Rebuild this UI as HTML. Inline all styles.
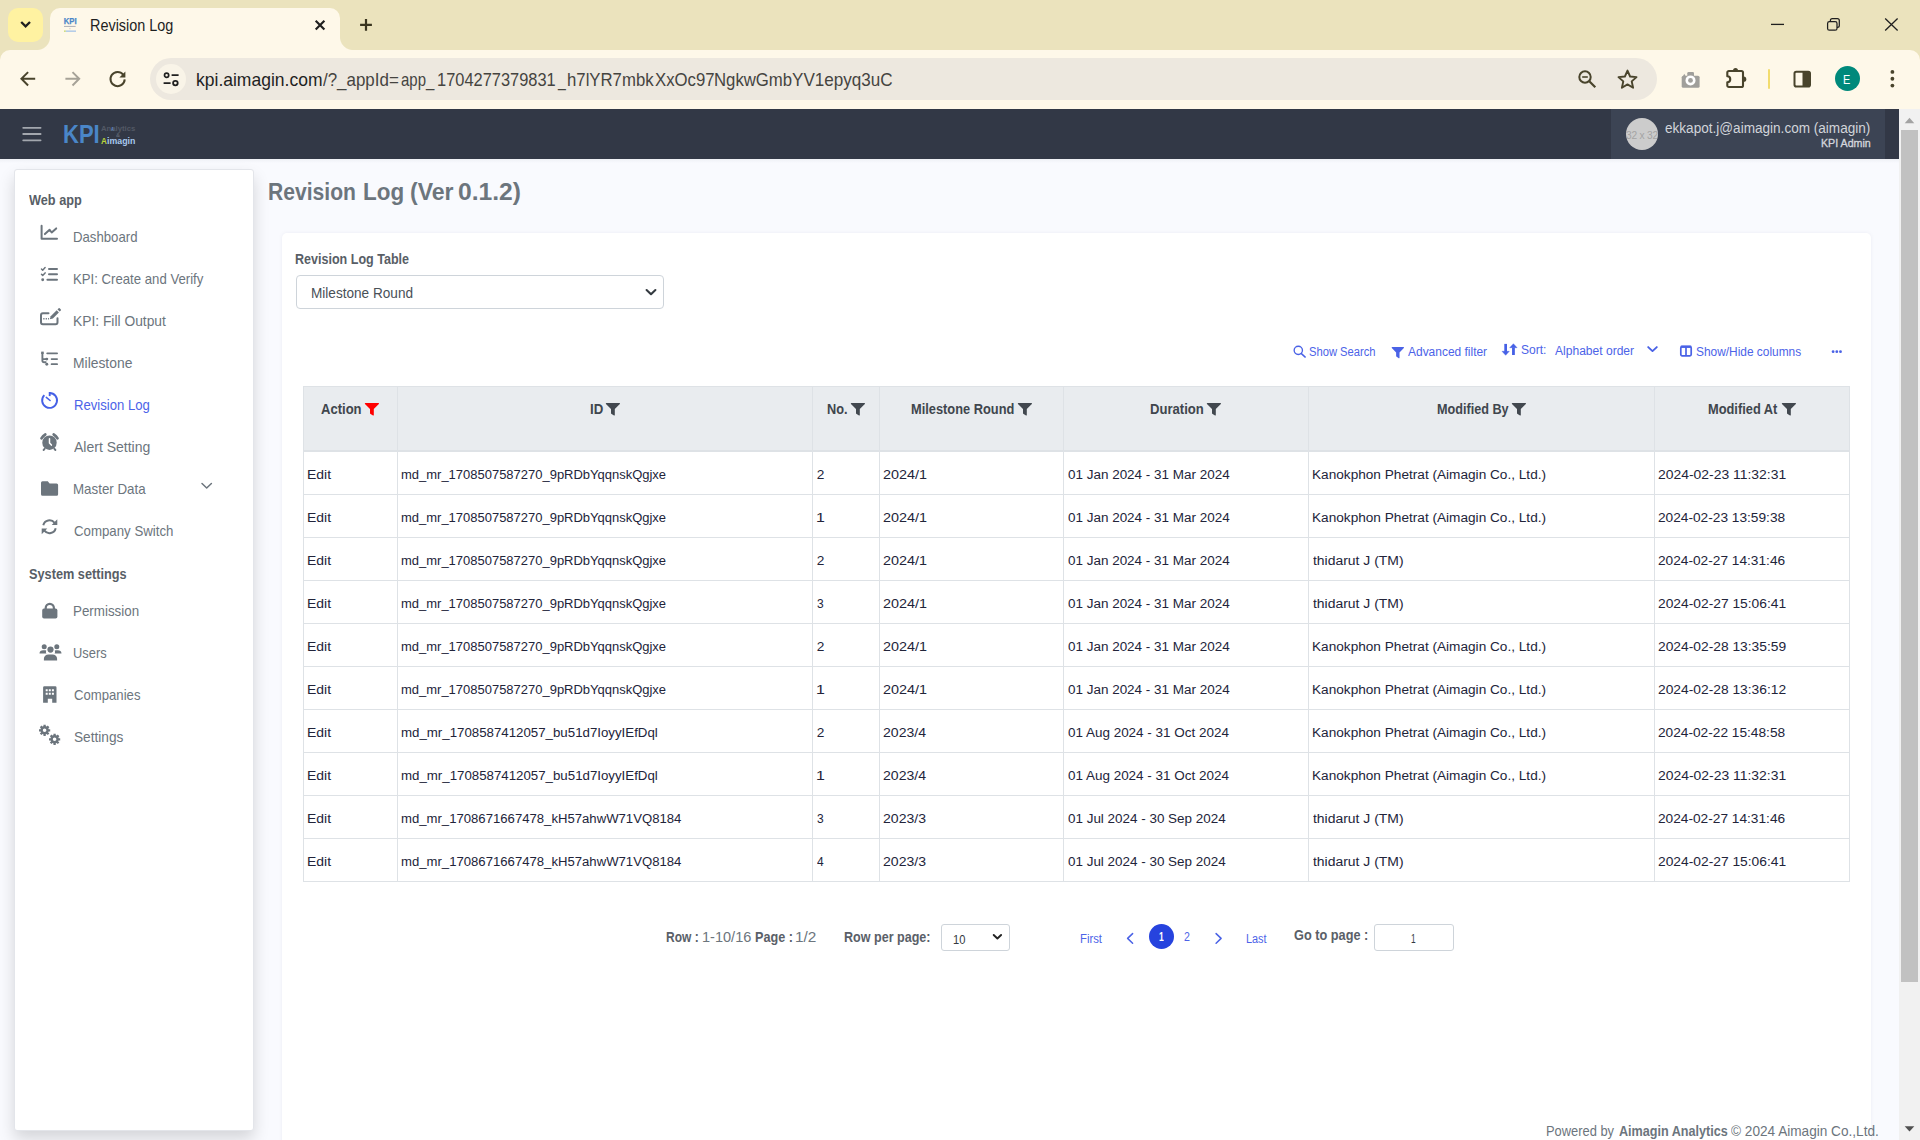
<!DOCTYPE html>
<html lang="en"><head><meta charset="utf-8"><title>Revision Log</title>
<style>

*{box-sizing:border-box;margin:0;padding:0}
html,body{width:1920px;height:1140px;overflow:hidden}
body{position:relative;background:#f9fafe;font-family:"Liberation Sans",sans-serif;}
.a{position:absolute}
.t{position:absolute;white-space:pre;line-height:1;transform-origin:0 50%;display:block}
svg{position:absolute;overflow:visible}
/* browser chrome */
#tabstrip{left:0;top:0;width:1920px;height:64px;background:#ebe3bd}
#tabsearch{left:8px;top:8px;width:35px;height:34px;border-radius:10px;background:#fff2a1}
#tab{left:50px;top:8px;width:290px;height:42px;background:#fef8e9;border-radius:10px 10px 0 0}
#tabl{left:37px;top:37px;width:13px;height:13px;background:radial-gradient(circle at 0 0,rgba(0,0,0,0) 12.5px,#fef8e9 13.5px)}
#tabr{left:340px;top:37px;width:13px;height:13px;background:radial-gradient(circle at 100% 0,rgba(0,0,0,0) 12.5px,#fef8e9 13.5px)}
#toolbar{left:0;top:50px;width:1920px;height:59px;background:#fef8e9;border-radius:10px 10px 0 0}
#omni{left:150px;top:58px;width:1507px;height:42px;border-radius:21px;background:#ede8df}
#siteinfo{left:156px;top:64px;width:30px;height:30px;border-radius:15px;background:#f9f4e8}
#avatar{left:1835px;top:66px;width:25px;height:25px;border-radius:12.5px;background:#00897b}
#ydiv{left:1768px;top:69px;width:2px;height:19.500px;background:#f2dc6e;border-radius:1px}
/* app */
#hdr{left:0;top:109px;width:1899px;height:49.5px;background:#323846}
#hdrsh{left:0;top:158px;width:1899px;height:5px;background:linear-gradient(#eceef3,#f9fafe)}
#user{left:1611px;top:109px;width:274px;height:49.5px;background:#3c4454}
#uav{left:1626px;top:118px;width:32px;height:32px;border-radius:16px;background:#cccccc;overflow:hidden}
#uav span{position:absolute;left:-4px;top:12px;width:40px;text-align:center;font-size:10.2px;line-height:12px;color:#a4a4a4;white-space:nowrap;letter-spacing:-0.2px}
#sbtrack{left:1899px;top:109px;width:21px;height:1031px;background:#f1f1f1}
#sbthumb{left:1901px;top:130px;width:17px;height:852px;background:#c1c1c1}
#side{left:14px;top:169px;width:240px;height:962px;background:#fff;border-radius:3px;border:1px solid #e3e5ea;box-shadow:0 8px 16px rgba(0,0,0,.15)}
#card{left:282px;top:233px;width:1589px;height:920px;background:#fff;border-radius:5px;box-shadow:0 0 4px rgba(30,40,80,.06)}
#sel{left:296px;top:275px;width:368px;height:34px;border:1px solid #ced4da;border-radius:4px;background:#fff}
#thead{left:303px;top:386px;width:1547px;height:65px;background:#e9ecef}
.hl{position:absolute;left:303px;width:1547px;height:1px;background:#dee2e6}
.vl{position:absolute;top:386px;width:1px;height:496px;background:#dee2e6}
#psel{left:941px;top:924px;width:69px;height:27px;border:1px solid #ced4da;border-radius:3px;background:#fff}
#pinp{left:1374px;top:924px;width:80px;height:27px;border:1px solid #ced4da;border-radius:3px;background:#fff}
#pcur{left:1149px;top:924px;width:25px;height:25px;border-radius:12.5px;background:#2643de}
</style></head>
<body>
<div class="a" id="tabstrip"></div>
<div class="a" id="tabsearch"></div>
<div class="a" id="toolbar"></div>
<div class="a" id="tab"></div><div class="a" id="tabl"></div><div class="a" id="tabr"></div>
<div class="a" id="omni"></div><div class="a" id="siteinfo"></div>
<div class="a" id="ydiv"></div><div class="a" id="avatar"></div>
<svg style="left:0px;top:0px" width="60" height="50" viewBox="0 0 60 50"><path d="M21.200 22l4.400 4.400 4.400-4.400" fill="none" stroke="#1f1f1f" stroke-width="2.300" stroke-linecap="butt" stroke-linejoin="miter"/></svg>
<svg style="left:60px;top:15px" width="20" height="20" viewBox="0 0 20 20"><text x="3.700" y="8.500" font-family="Liberation Sans" font-weight="700" font-size="8.800" fill="#4a86c8" stroke="#4a86c8" stroke-width=".25" textLength="12.900" lengthAdjust="spacingAndGlyphs">KPI</text><rect x="4" y="10.900" width="11.600" height="1.100" fill="#b4b6bc" /><rect x="9.200" y="13.300" width="1.300" height=".9" fill="#c5c7cc"/><rect x="4" y="15.500" width="1.800" height="1.300" fill="#c3d86a"/><rect x="5.800" y="15.500" width="10.200" height="1.300" fill="#a4c2e8"/></svg>
<svg style="left:300px;top:10px" width="90" height="30" viewBox="0 0 90 30"><path d="M15.700 10.700l8.700 8.700M24.400 10.700l-8.700 8.700" stroke="#1f1f1f" stroke-width="2.150" fill="none"/><path d="M60.100 14.900h11.800M66 9v11.800" stroke="#3a351f" stroke-width="2.200" fill="none"/></svg>
<svg style="left:1760px;top:10px" width="150" height="30" viewBox="0 0 150 30"><path d="M11 14.400h13" stroke="#1f1f1f" stroke-width="1.300" fill="none"/><rect x="67.600" y="11.700" width="9.400" height="8.500" rx="1.800" stroke="#1f1f1f" stroke-width="1.250" fill="none"/><path d="M70.400 11.700v-1.200a1.900 1.900 0 0 1 1.900-1.900h5.100a1.900 1.900 0 0 1 1.900 1.900v5a1.900 1.900 0 0 1-1.900 1.900h-.4" stroke="#1f1f1f" stroke-width="1.250" fill="none"/><path d="M125.200 8.500l12.400 12M137.600 8.500l-12.400 12" stroke="#1f1f1f" stroke-width="1.300" fill="none"/></svg>
<svg style="left:10px;top:60px" width="140" height="40" viewBox="0 0 140 40"><path d="M25.200 18.800H11.800M18.100 12.100l-6.700 6.700 6.700 6.700" stroke="#49442c" stroke-width="1.950" fill="none" stroke-linejoin="miter"/><path d="M55.400 18.800h13.400M62.500 12.100l6.700 6.700-6.700 6.700" stroke="#a6a297" stroke-width="1.950" fill="none"/><path d="M113.200 14.700A7.100 7.100 0 1 0 114.700 19.400" stroke="#49442c" stroke-width="2" fill="none"/><path d="M115.400 11.600v6h-6z" fill="#49442c"/></svg>
<svg style="left:156px;top:64px" width="30" height="30" viewBox="0 0 30 30"><circle cx="10.600" cy="11.200" r="2.100" fill="none" stroke="#1f1f1f" stroke-width="1.700"/><path d="M15.600 11.200h7M7.600 19.100h7" stroke="#1f1f1f" stroke-width="1.800" fill="none"/><circle cx="19.400" cy="19.100" r="2.300" fill="none" stroke="#1f1f1f" stroke-width="1.800"/></svg>
<svg style="left:1570px;top:62px" width="80" height="36" viewBox="0 0 80 36"><circle cx="15" cy="15" r="5.7" fill="none" stroke="#49442c" stroke-width="2"/><path d="M19.3 19.3l6 6" stroke="#49442c" stroke-width="2.2"/><path d="M12.2 15h5.6" stroke="#49442c" stroke-width="1.6"/><path d="M57.5 8.6l2.6 5.9 6.4.6-4.8 4.3 1.4 6.3-5.6-3.3-5.6 3.3 1.4-6.3-4.8-4.3 6.4-.6z" fill="none" stroke="#49442c" stroke-width="1.9" stroke-linejoin="round"/></svg>
<svg style="left:1670px;top:62px" width="240" height="36" viewBox="0 0 240 36"><rect x="11.700" y="13.700" width="17.900" height="12.100" rx="1.600" fill="#a09f9b"/><path d="M17.300 14v-2.700a1.300 1.300 0 0 1 1.300-1.300h4.100a1.300 1.300 0 0 1 1.300 1.300V14z" fill="#a09f9b"/><path d="M13.100 13.900l1.200-2.100 1.200 2.100z" fill="#a09f9b"/><circle cx="20.500" cy="18.400" r="5" fill="#ffffff"/><circle cx="20.500" cy="18.400" r="2.400" fill="#a09f9b"/><path d="M58.900 9H71.400a1.600 1.600 0 0 1 1.600 1.600V23.400a1.600 1.600 0 0 1-1.600 1.600H58.900a1.600 1.600 0 0 1-1.600-1.600V20.200a2.950 2.950 0 0 0 0-5.900V10.600a1.600 1.600 0 0 1 1.600-1.600z" fill="none" stroke="#49442c" stroke-width="2.100" stroke-linejoin="round"/><path d="M63 8.400a2.500 2.500 0 0 1 5 0z" fill="#49442c"/><path d="M73.700 14.600a2.600 2.600 0 0 1 0 5.200z" fill="#49442c"/><rect x="124.500" y="9.700" width="15.500" height="14.800" rx="1.800" fill="none" stroke="#49442c" stroke-width="2"/><path d="M132.500 9.700h7.500v14.800h-7.500z" fill="#49442c"/><circle cx="222.400" cy="9.900" r="1.900" fill="#49442c"/><circle cx="222.400" cy="16.750" r="1.900" fill="#49442c"/><circle cx="222.400" cy="23.600" r="1.900" fill="#49442c"/></svg>
<div class="a" id="hdrsh"></div><div class="a" id="hdr"></div><div class="a" id="user"></div><div class="a" id="uav"><span>32 x 32</span></div>
<svg style="left:20px;top:120px" width="30" height="30" viewBox="0 0 30 30"><path d="M3.200 7.800h17.400M3.200 14h17.400M3.200 20.300h17.400" stroke="#a3a7ae" stroke-width="1.800" stroke-linecap="round" fill="none"/></svg>
<div class="a" id="sbtrack"></div><div class="a" id="sbthumb"></div>
<svg style="left:1899px;top:109px" width="21" height="1031" viewBox="0 0 21 1031"><path d="M5.700 14.200l4.800-5.400 4.800 5.400z" fill="#a3a3a3"/><path d="M5.700 1017.200l4.800 5.400 4.800-5.400z" fill="#505050"/></svg>
<div class="a" id="side"></div><div class="a" id="card"></div><div class="a" id="sel"></div>
<svg style="left:640px;top:280px" width="24" height="24" viewBox="0 0 24 24"><path d="M6.600 10l4.400 4.200 4.400-4.200" fill="none" stroke="#343a40" stroke-width="2.100" stroke-linecap="round" stroke-linejoin="round"/></svg>
<svg style="left:38px;top:222px" width="24" height="20" viewBox="0 0 24 20"><path d="M3.600 3.800v12.900h15.400" fill="none" stroke="#6c757d" stroke-width="2" stroke-linecap="round" stroke-linejoin="round"/><path d="M6.900 12.100l4.700-4.300 2.100 2.700 4.500-4.100" fill="none" stroke="#6c757d" stroke-width="2" stroke-linecap="round" stroke-linejoin="round"/></svg>
<svg style="left:38px;top:264px" width="24" height="20" viewBox="0 0 24 20"><path d="M11 5h8M11 10.300h8M9.400 15.700h9.600" fill="none" stroke="#6c757d" stroke-width="2" stroke-linecap="round" stroke-linejoin="round"/><path d="M3.500 5l1.200 1.200 2.400-2.600M3.500 10.300l1.200 1.200 2.400-2.600" fill="none" stroke="#6c757d" stroke-width="1.500" stroke-linecap="round" stroke-linejoin="round"/><circle cx="4.700" cy="15.700" r="1.450" fill="#6c757d"/></svg>
<svg style="left:38px;top:306px" width="26" height="22" viewBox="0 0 26 22"><path d="M10.500 7.300H4.900a1.900 1.900 0 0 0-1.900 1.900v7.100a1.900 1.900 0 0 0 1.900 1.900h12.700a1.900 1.900 0 0 0 1.900-1.900V12.300" fill="none" stroke="#6c757d" stroke-width="2" stroke-linecap="round" stroke-linejoin="round"/><path d="M11.800 13.300l.9-3.100 6-6 2.200 2.200-6 6z" fill="#6c757d"/><path d="M19.500 3.400l1.100-1.100a.8.800 0 0 1 1.100 0l1.100 1.100a.8.800 0 0 1 0 1.100l-1.100 1.100z" fill="#6c757d"/><path d="M5.300 12.800h1.200M7.700 12.800h1.200M10.100 12.800h.9" stroke="#6c757d" stroke-width="1.500" fill="none"/></svg>
<svg style="left:38px;top:348px" width="24" height="20" viewBox="0 0 24 20"><path d="M4.400 4.600v7.900a1.800 1.800 0 0 0 1.800 1.800h2.200M4.400 11.100h4" fill="none" stroke="#6c757d" stroke-width="1.900" stroke-linecap="butt"/><rect x="3.200" y="3.600" width="2.500" height="2.400" fill="#6c757d"/><circle cx="8.800" cy="11.100" r="1.450" fill="#6c757d"/><circle cx="8.800" cy="16.300" r="1.450" fill="#6c757d"/><path d="M9.200 5.300h9.900M13.600 11.100h5.500M13.600 16.200h5.500" fill="none" stroke="#6c757d" stroke-width="1.800" stroke-linecap="round"/></svg>
<svg style="left:38px;top:388px" width="24" height="24" viewBox="0 0 24 24"><path d="M11.600 4.950A7.450 7.450 0 1 1 6.330 7.130" fill="none" stroke="#4560e6" stroke-width="1.900" stroke-linecap="butt"/><path d="M11.700 4v4.100" fill="none" stroke="#4560e6" stroke-width="1.900"/><path d="M8.300 9.400l3.800 3.100" fill="none" stroke="#4560e6" stroke-width="1.500" stroke-linecap="round"/></svg>
<svg style="left:38px;top:430px" width="24" height="24" viewBox="0 0 24 24"><circle cx="11.500" cy="12.700" r="7.200" fill="#6c757d"/><path d="M3.500 8.400A9.300 9.300 0 0 1 7.300 4.500M19.500 8.400A9.300 9.300 0 0 0 15.700 4.500" fill="none" stroke="#6c757d" stroke-width="2.700" stroke-linecap="round"/><path d="M6.800 18.700l-1.200 1.300M16.200 18.700l1.200 1.300" stroke="#6c757d" stroke-width="1.900" stroke-linecap="round"/><path d="M11.500 8.700v4.200l1.900 2.200" fill="none" stroke="#fff" stroke-width="1.500" stroke-linecap="round" stroke-linejoin="round"/></svg>
<svg style="left:38px;top:478px" width="24" height="20" viewBox="0 0 24 20"><path d="M4.500 3.300h5.300l1.800 2.100h7a1.500 1.500 0 0 1 1.500 1.500v9.400a1.500 1.500 0 0 1-1.500 1.500H4.500A1.500 1.500 0 0 1 3 16.300V4.800a1.500 1.500 0 0 1 1.500-1.500z" fill="#6c757d"/></svg>
<svg style="left:38px;top:516px" width="24" height="22" viewBox="0 0 24 22"><path d="M5.300 9.200a6.400 6.400 0 0 1 11.300-2.400M17.700 12.300a6.400 6.400 0 0 1-11.300 2.400" fill="none" stroke="#6c757d" stroke-width="2"/><path d="M19.300 3.300v5.600h-5.600zM3.700 18.200v-5.600h5.600z" fill="#6c757d"/></svg>
<svg style="left:200px;top:480px" width="14" height="12" viewBox="0 0 14 12"><path d="M2 3.500l4.700 4.500 4.700-4.500" fill="none" stroke="#6c757d" stroke-width="1.500" stroke-linecap="round" stroke-linejoin="round"/></svg>
<svg style="left:38px;top:598px" width="24" height="24" viewBox="0 0 24 24"><rect x="4.200" y="10.600" width="15.200" height="10" rx="1.800" fill="#6c757d"/><path d="M7.700 11V9.900a4.100 4.100 0 0 1 8.200 0V11" fill="none" stroke="#6c757d" stroke-width="2.200"/></svg>
<svg style="left:38px;top:640px" width="26" height="24" viewBox="0 0 26 24"><circle cx="6.200" cy="6.800" r="2.500" fill="#6c757d"/><circle cx="18.800" cy="6.800" r="2.500" fill="#6c757d"/><circle cx="12.500" cy="9.600" r="3.100" fill="#6c757d"/><path d="M1.500 13.500c0-2 1.600-3.200 3.600-3.200h1.600c.6 0 1.100.1 1.600.4-.5.800-.5 2 .2 2.800zM23.500 13.500c0-2-1.600-3.200-3.600-3.200h-1.600c-.6 0-1.100.1-1.600.4.500.8.500 2-.2 2.800zM5.900 20.500v-1.700c0-2.500 2-4.300 4.500-4.300h4.200c2.500 0 4.500 1.800 4.500 4.300v1.700z" fill="#6c757d"/></svg>
<svg style="left:38px;top:684px" width="24" height="22" viewBox="0 0 24 22"><path d="M6.300 2.300h11a1.200 1.200 0 0 1 1.200 1.200v15.200h-4.300v-3.900H9.800v3.900H5.100V3.500a1.200 1.200 0 0 1 1.200-1.200z" fill="#6c757d"/><path d="M7.700 5.200h2v2h-2zM10.800 5.200h2v2h-2zM13.900 5.200h2v2h-2zM7.700 8.700h2v2h-2zM10.800 8.700h2v2h-2zM13.900 8.700h2v2h-2z" fill="#fff"/></svg>
<svg style="left:36px;top:720px" width="30" height="26" viewBox="0 0 30 26"><circle cx="8.6" cy="10.3" r="3.0" fill="none" stroke="#6c757d" stroke-width="2.400"/><path d="M11.70 10.30L14.20 10.30M10.79 12.49L12.56 14.26M8.60 13.40L8.60 15.90M6.41 12.49L4.64 14.26M5.50 10.30L3.00 10.30M6.41 8.11L4.64 6.34M8.60 7.20L8.60 4.70M10.79 8.11L12.56 6.34" stroke="#6c757d" stroke-width="2.300" fill="none"/><circle cx="18.6" cy="19.3" r="3.0" fill="none" stroke="#6c757d" stroke-width="2.400"/><path d="M21.70 19.30L24.20 19.30M20.79 21.49L22.56 23.26M18.60 22.40L18.60 24.90M16.41 21.49L14.64 23.26M15.50 19.30L13.00 19.30M16.41 17.11L14.64 15.34M18.60 16.20L18.60 13.70M20.79 17.11L22.56 15.34" stroke="#6c757d" stroke-width="2.300" fill="none"/></svg>
<svg style="left:1290px;top:342px" width="20" height="20" viewBox="0 0 20 20"><circle cx="8.300" cy="8.350" r="4.150" fill="none" stroke="#4a62e6" stroke-width="1.350"/><path d="M11.400 11.600l3.800 3.500" stroke="#4a62e6" stroke-width="1.450" stroke-linecap="round"/></svg>
<svg style="left:1392px;top:346.6px" width="12" height="10.6" viewBox="0 0 12 10.6"><path d="M.6 0h10.8a.6.600 0 0 1 .45 1l-4.32 4.45v5.30a.5.500 0 0 1-.8.400l-2.40-1.59a.6.600 0 0 1-.2-.4v-3.71l-4.32-4.45a.6.600 0 0 1 .45-1z" fill="#4a62e6"/></svg>
<svg style="left:1500px;top:342px" width="20" height="18" viewBox="0 0 20 18"><path d="M5.650 1.900v8" stroke="#4560e6" stroke-width="2.700" fill="none"/><path d="M2 9.300h7.300l-3.650 4z" fill="#4560e6" stroke="#4560e6" stroke-width=".4" stroke-linejoin="round"/><path d="M13.450 13v-7.500" stroke="#4560e6" stroke-width="2.800" fill="none"/><path d="M9.700 5.700h7.400l-3.700-4z" fill="#4560e6" stroke="#4560e6" stroke-width=".4" stroke-linejoin="round"/></svg>
<svg style="left:1645px;top:343px" width="16" height="12" viewBox="0 0 16 12"><path d="M3.200 4.100l4.300 4 4.300-4" fill="none" stroke="#4a62e6" stroke-width="1.900" stroke-linecap="round" stroke-linejoin="round"/></svg>
<svg style="left:1678px;top:343px" width="16" height="16" viewBox="0 0 16 16"><rect x="2.800" y="3.600" width="10.400" height="9.200" rx="1.300" fill="none" stroke="#4a62e6" stroke-width="1.700"/><path d="M8 3.600v9.200" stroke="#4a62e6" stroke-width="1.700"/><path d="M2.800 3.700h10.400" stroke="#4a62e6" stroke-width="2.400"/></svg>
<svg style="left:1828px;top:346px" width="18" height="10" viewBox="0 0 18 10"><circle cx="5.100" cy="5.700" r="1.400" fill="#4a62e6"/><circle cx="8.800" cy="5.700" r="1.400" fill="#4a62e6"/><circle cx="12.500" cy="5.700" r="1.400" fill="#4a62e6"/></svg>
<div class="a" id="thead"></div>
<div class="hl" style="top:386px"></div>
<div class="hl" style="top:450px"></div>
<div class="hl" style="top:451px"></div>
<div class="hl" style="top:494px"></div>
<div class="hl" style="top:537px"></div>
<div class="hl" style="top:580px"></div>
<div class="hl" style="top:623px"></div>
<div class="hl" style="top:666px"></div>
<div class="hl" style="top:709px"></div>
<div class="hl" style="top:752px"></div>
<div class="hl" style="top:795px"></div>
<div class="hl" style="top:838px"></div>
<div class="hl" style="top:881px"></div>
<div class="vl" style="left:303px"></div>
<div class="vl" style="left:397px"></div>
<div class="vl" style="left:812px"></div>
<div class="vl" style="left:879px"></div>
<div class="vl" style="left:1063px"></div>
<div class="vl" style="left:1308px"></div>
<div class="vl" style="left:1654px"></div>
<div class="vl" style="left:1849px"></div>
<svg style="left:365px;top:403px" width="14" height="12" viewBox="0 0 14 12"><path d="M.6 0h12.8a.6.600 0 0 1 .45 1l-5.04 5.04v6.00a.5.500 0 0 1-.8.400l-2.80-1.80a.6.600 0 0 1-.2-.4v-4.20l-5.04-5.04a.6.600 0 0 1 .45-1z" fill="#ff0000"/></svg>
<svg style="left:606px;top:403px" width="14" height="12" viewBox="0 0 14 12"><path d="M.6 0h12.8a.6.600 0 0 1 .45 1l-5.04 5.04v6.00a.5.500 0 0 1-.8.400l-2.80-1.80a.6.600 0 0 1-.2-.4v-4.20l-5.04-5.04a.6.600 0 0 1 .45-1z" fill="#42484f"/></svg>
<svg style="left:851px;top:403px" width="14" height="12" viewBox="0 0 14 12"><path d="M.6 0h12.8a.6.600 0 0 1 .45 1l-5.04 5.04v6.00a.5.500 0 0 1-.8.400l-2.80-1.80a.6.600 0 0 1-.2-.4v-4.20l-5.04-5.04a.6.600 0 0 1 .45-1z" fill="#42484f"/></svg>
<svg style="left:1018px;top:403px" width="14" height="12" viewBox="0 0 14 12"><path d="M.6 0h12.8a.6.600 0 0 1 .45 1l-5.04 5.04v6.00a.5.500 0 0 1-.8.400l-2.80-1.80a.6.600 0 0 1-.2-.4v-4.20l-5.04-5.04a.6.600 0 0 1 .45-1z" fill="#42484f"/></svg>
<svg style="left:1207px;top:403px" width="14" height="12" viewBox="0 0 14 12"><path d="M.6 0h12.8a.6.600 0 0 1 .45 1l-5.04 5.04v6.00a.5.500 0 0 1-.8.400l-2.80-1.80a.6.600 0 0 1-.2-.4v-4.20l-5.04-5.04a.6.600 0 0 1 .45-1z" fill="#42484f"/></svg>
<svg style="left:1512px;top:403px" width="14" height="12" viewBox="0 0 14 12"><path d="M.6 0h12.8a.6.600 0 0 1 .45 1l-5.04 5.04v6.00a.5.500 0 0 1-.8.400l-2.80-1.80a.6.600 0 0 1-.2-.4v-4.20l-5.04-5.04a.6.600 0 0 1 .45-1z" fill="#42484f"/></svg>
<svg style="left:1782px;top:403px" width="14" height="12" viewBox="0 0 14 12"><path d="M.6 0h12.8a.6.600 0 0 1 .45 1l-5.04 5.04v6.00a.5.500 0 0 1-.8.400l-2.80-1.80a.6.600 0 0 1-.2-.4v-4.20l-5.04-5.04a.6.600 0 0 1 .45-1z" fill="#42484f"/></svg>
<div class="a" id="psel"></div><div class="a" id="pinp"></div><div class="a" id="pcur"></div>
<svg style="left:988px;top:928px" width="18" height="18" viewBox="0 0 18 18"><path d="M5.700 7l3.700 3.500 3.700-3.500" fill="none" stroke="#222" stroke-width="1.900" stroke-linecap="round" stroke-linejoin="round"/></svg>
<svg style="left:1120px;top:928px" width="110" height="20" viewBox="0 0 110 20"><path d="M12.600 5.600l-5 4.800 5 4.800" fill="none" stroke="#4a62e6" stroke-width="1.500" stroke-linecap="round" stroke-linejoin="round"/><path d="M96.100 5.600l5 4.800-5 4.800" fill="none" stroke="#4a62e6" stroke-width="1.500" stroke-linecap="round" stroke-linejoin="round"/></svg>
<span class="t" id="t0" style="left:89.68px;top:18px;font-size:15.7px;color:#1f1f1f;transform:scaleX(0.9194);">Revision Log</span>
<span class="t" id="t1" style="left:196.16px;top:71px;font-size:18.6px;color:#1f1f1f;transform:scaleX(0.9416);">kpi.aimagin.com</span>
<span class="t" id="t2" style="left:323.10px;top:71px;font-size:18.6px;color:#45443f;transform:scaleX(0.9104);">/?_appId=</span>
<span class="t" id="t3" style="left:400.90px;top:71px;font-size:18.6px;color:#45443f;transform:scaleX(0.8043);">app_</span>
<span class="t" id="t4" style="left:436.62px;top:71px;font-size:18.6px;color:#45443f;transform:scaleX(0.8829);">1704277379831</span>
<span class="t" id="t5" style="left:558.00px;top:71px;font-size:18.6px;color:#45443f;transform:scaleX(0.7500);">_</span>
<span class="t" id="t6" style="left:567.20px;top:71px;font-size:18.6px;color:#45443f;transform:scaleX(0.9007);">h7lYR7mbk</span>
<span class="t" id="t7" style="left:654.75px;top:71px;font-size:18.6px;color:#45443f;transform:scaleX(0.9005);">XxOc97</span>
<span class="t" id="t8" style="left:714.40px;top:71px;font-size:18.6px;color:#45443f;transform:scaleX(0.9000);">NgkwGmb</span>
<span class="t" id="t9" style="left:792.20px;top:71px;font-size:18.6px;color:#45443f;transform:scaleX(0.9189);">YV1epyq3uC</span>
<span class="t" id="t10" style="left:1843.40px;top:73px;font-size:13.6px;color:#ffffff;transform:scaleX(0.8000);">E</span>
<span class="t" id="t11" style="left:62.95px;top:121px;font-size:26px;color:#4a86c8;font-weight:700;transform:scaleX(0.8463);">KPI</span>
<span class="t" id="t12" style="left:100.50px;top:126px;font-size:6.9px;color:#525865;font-weight:700;transform:scaleX(1.1199);">Analytics</span>
<span class="t" id="t13" style="left:111.00px;top:126px;font-size:6px;color:#5b84c4;font-weight:700;transform:scaleX(0.6800);">A</span>
<span class="t" id="t14" style="left:116.00px;top:133px;font-size:5.5px;color:#5d6471;font-weight:700;transform:scaleX(1.0000);">&amp;</span>
<span class="t" id="t15" style="left:100.50px;top:136px;font-size:9.5px;color:#b9d53a;font-weight:700;transform:scaleX(0.8571);">A</span>
<span class="t" id="t16" style="left:106.50px;top:136px;font-size:9.5px;color:#a9c9ee;font-weight:700;transform:scaleX(0.9250);">imagin</span>
<span class="t" id="t17" style="left:1665.00px;top:120px;font-size:15.2px;color:#d1d4da;transform:scaleX(0.8935);">ekkapot.j@aimagin.com (aimagin)</span>
<span class="t" id="t18" style="left:1820.50px;top:138px;font-size:11.8px;color:#d4d7dd;transform:scaleX(0.9027);-webkit-text-stroke:0.35px #d4d7dd;">KPI Admin</span>
<span class="t" id="t19" style="left:268.12px;top:180px;font-size:23.9px;color:#6c757d;font-weight:700;transform:scaleX(0.8828);">Revision</span>
<span class="t" id="t20" style="left:362.56px;top:180px;font-size:23.9px;color:#6c757d;font-weight:700;transform:scaleX(0.9396);">Log</span>
<span class="t" id="t21" style="left:409.94px;top:180px;font-size:23.9px;color:#6c757d;font-weight:700;transform:scaleX(0.9645);">(Ver</span>
<span class="t" id="t22" style="left:457.60px;top:180px;font-size:23.9px;color:#6c757d;font-weight:700;transform:scaleX(1.0310);">0.1.2)</span>
<span class="t" id="t23" style="left:295.37px;top:251px;font-size:15.2px;color:#585e66;font-weight:700;transform:scaleX(0.8254);">Revision Log Table</span>
<span class="t" id="t24" style="left:310.88px;top:286px;font-size:14.8px;color:#495057;transform:scaleX(0.9188);">Milestone Round</span>
<span class="t" id="t25" style="left:28.90px;top:193px;font-size:14.8px;color:#585e66;font-weight:700;transform:scaleX(0.8591);">Web app</span>
<span class="t" id="t26" style="left:73.31px;top:230px;font-size:14.8px;color:#6c757d;transform:scaleX(0.8910);">Dashboard</span>
<span class="t" id="t27" style="left:73.31px;top:272px;font-size:14.8px;color:#6c757d;transform:scaleX(0.8904);">KPI: Create and Verify</span>
<span class="t" id="t28" style="left:73.27px;top:314px;font-size:14.8px;color:#6c757d;transform:scaleX(0.9330);">KPI: Fill Output</span>
<span class="t" id="t29" style="left:73.26px;top:356px;font-size:14.8px;color:#6c757d;transform:scaleX(0.9372);">Milestone</span>
<span class="t" id="t30" style="left:73.81px;top:398px;font-size:14.8px;color:#4c63e8;transform:scaleX(0.8871);">Revision Log</span>
<span class="t" id="t31" style="left:74.20px;top:440px;font-size:14.8px;color:#6c757d;transform:scaleX(0.9468);">Alert Setting</span>
<span class="t" id="t32" style="left:73.30px;top:482px;font-size:14.8px;color:#6c757d;transform:scaleX(0.9010);">Master Data</span>
<span class="t" id="t33" style="left:74.20px;top:524px;font-size:14.8px;color:#6c757d;transform:scaleX(0.8954);">Company Switch</span>
<span class="t" id="t34" style="left:28.90px;top:567px;font-size:14.8px;color:#585e66;font-weight:700;transform:scaleX(0.8600);">System settings</span>
<span class="t" id="t35" style="left:73.30px;top:604px;font-size:14.8px;color:#6c757d;transform:scaleX(0.9034);">Permission</span>
<span class="t" id="t36" style="left:73.33px;top:646px;font-size:14.8px;color:#6c757d;transform:scaleX(0.8700);">Users</span>
<span class="t" id="t37" style="left:74.20px;top:688px;font-size:14.8px;color:#6c757d;transform:scaleX(0.8879);">Companies</span>
<span class="t" id="t38" style="left:74.20px;top:730px;font-size:14.8px;color:#6c757d;transform:scaleX(0.9234);">Settings</span>
<span class="t" id="t39" style="left:1309.00px;top:346px;font-size:12.3px;color:#4c63e8;transform:scaleX(0.9100);">Show Search</span>
<span class="t" id="t40" style="left:1407.70px;top:346px;font-size:12.3px;color:#4c63e8;transform:scaleX(0.9724);">Advanced filter</span>
<span class="t" id="t41" style="left:1520.70px;top:344px;font-size:12.3px;color:#4c63e8;transform:scaleX(0.9784);">Sort:</span>
<span class="t" id="t42" style="left:1555.30px;top:345px;font-size:12.3px;color:#4c63e8;transform:scaleX(0.9805);">Alphabet order</span>
<span class="t" id="t43" style="left:1696.00px;top:346px;font-size:12.3px;color:#4c63e8;transform:scaleX(0.9675);">Show/Hide columns</span>
<span class="t" id="t44" style="left:321.40px;top:402px;font-size:14.5px;color:#40464d;font-weight:700;transform:scaleX(0.8994);">Action</span>
<span class="t" id="t45" style="left:589.70px;top:402px;font-size:14.5px;color:#40464d;font-weight:700;transform:scaleX(0.9124);">ID</span>
<span class="t" id="t46" style="left:826.80px;top:402px;font-size:14.5px;color:#40464d;font-weight:700;transform:scaleX(0.8787);">No.</span>
<span class="t" id="t47" style="left:911.30px;top:402px;font-size:14.5px;color:#40464d;font-weight:700;transform:scaleX(0.8849);">Milestone Round</span>
<span class="t" id="t48" style="left:1150.30px;top:402px;font-size:14.5px;color:#40464d;font-weight:700;transform:scaleX(0.9021);">Duration</span>
<span class="t" id="t49" style="left:1436.70px;top:402px;font-size:14.5px;color:#40464d;font-weight:700;transform:scaleX(0.8721);">Modified By</span>
<span class="t" id="t50" style="left:1707.70px;top:402px;font-size:14.5px;color:#40464d;font-weight:700;transform:scaleX(0.8850);">Modified At</span>
<span class="t" id="t51" style="left:306.58px;top:468px;font-size:13.7px;color:#22243a;transform:scaleX(1.0183);">Edit</span>
<span class="t" id="t52" style="left:401.30px;top:468px;font-size:13.7px;color:#22243a;transform:scaleX(0.9483);">md_mr_1708507587270_9pRDbYqqnskQgjxe</span>
<span class="t" id="t53" style="left:816.80px;top:468px;font-size:13.7px;color:#22243a;transform:scaleX(1.0000);">2</span>
<span class="t" id="t54" style="left:883.30px;top:468px;font-size:13.7px;color:#22243a;transform:scaleX(1.0521);">2024/1</span>
<span class="t" id="t55" style="left:1067.60px;top:468px;font-size:13.7px;color:#22243a;transform:scaleX(0.9833);">01 Jan 2024 - 31 Mar 2024</span>
<span class="t" id="t56" style="left:1311.50px;top:468px;font-size:13.7px;color:#22243a;transform:scaleX(0.9955);">Kanokphon Phetrat (Aimagin Co., Ltd.)</span>
<span class="t" id="t57" style="left:1658.30px;top:468px;font-size:13.7px;color:#22243a;transform:scaleX(1.0162);">2024-02-23 11:32:31</span>
<span class="t" id="t58" style="left:306.58px;top:511px;font-size:13.7px;color:#22243a;transform:scaleX(1.0183);">Edit</span>
<span class="t" id="t59" style="left:401.30px;top:511px;font-size:13.7px;color:#22243a;transform:scaleX(0.9483);">md_mr_1708507587270_9pRDbYqqnskQgjxe</span>
<span class="t" id="t60" style="left:815.63px;top:511px;font-size:13.7px;color:#22243a;transform:scaleX(1.1667);">1</span>
<span class="t" id="t61" style="left:883.30px;top:511px;font-size:13.7px;color:#22243a;transform:scaleX(1.0521);">2024/1</span>
<span class="t" id="t62" style="left:1067.60px;top:511px;font-size:13.7px;color:#22243a;transform:scaleX(0.9833);">01 Jan 2024 - 31 Mar 2024</span>
<span class="t" id="t63" style="left:1311.50px;top:511px;font-size:13.7px;color:#22243a;transform:scaleX(0.9955);">Kanokphon Phetrat (Aimagin Co., Ltd.)</span>
<span class="t" id="t64" style="left:1658.30px;top:511px;font-size:13.7px;color:#22243a;transform:scaleX(1.0001);">2024-02-23 13:59:38</span>
<span class="t" id="t65" style="left:306.58px;top:554px;font-size:13.7px;color:#22243a;transform:scaleX(1.0183);">Edit</span>
<span class="t" id="t66" style="left:401.30px;top:554px;font-size:13.7px;color:#22243a;transform:scaleX(0.9483);">md_mr_1708507587270_9pRDbYqqnskQgjxe</span>
<span class="t" id="t67" style="left:816.80px;top:554px;font-size:13.7px;color:#22243a;transform:scaleX(1.0000);">2</span>
<span class="t" id="t68" style="left:883.30px;top:554px;font-size:13.7px;color:#22243a;transform:scaleX(1.0521);">2024/1</span>
<span class="t" id="t69" style="left:1067.60px;top:554px;font-size:13.7px;color:#22243a;transform:scaleX(0.9833);">01 Jan 2024 - 31 Mar 2024</span>
<span class="t" id="t70" style="left:1312.50px;top:554px;font-size:13.7px;color:#22243a;transform:scaleX(1.0178);">thidarut J (TM)</span>
<span class="t" id="t71" style="left:1658.30px;top:554px;font-size:13.7px;color:#22243a;transform:scaleX(1.0001);">2024-02-27 14:31:46</span>
<span class="t" id="t72" style="left:306.58px;top:597px;font-size:13.7px;color:#22243a;transform:scaleX(1.0183);">Edit</span>
<span class="t" id="t73" style="left:401.30px;top:597px;font-size:13.7px;color:#22243a;transform:scaleX(0.9483);">md_mr_1708507587270_9pRDbYqqnskQgjxe</span>
<span class="t" id="t74" style="left:816.80px;top:597px;font-size:13.7px;color:#22243a;transform:scaleX(0.8750);">3</span>
<span class="t" id="t75" style="left:883.30px;top:597px;font-size:13.7px;color:#22243a;transform:scaleX(1.0521);">2024/1</span>
<span class="t" id="t76" style="left:1067.60px;top:597px;font-size:13.7px;color:#22243a;transform:scaleX(0.9833);">01 Jan 2024 - 31 Mar 2024</span>
<span class="t" id="t77" style="left:1312.50px;top:597px;font-size:13.7px;color:#22243a;transform:scaleX(1.0178);">thidarut J (TM)</span>
<span class="t" id="t78" style="left:1658.30px;top:597px;font-size:13.7px;color:#22243a;transform:scaleX(1.0080);">2024-02-27 15:06:41</span>
<span class="t" id="t79" style="left:306.58px;top:640px;font-size:13.7px;color:#22243a;transform:scaleX(1.0183);">Edit</span>
<span class="t" id="t80" style="left:401.30px;top:640px;font-size:13.7px;color:#22243a;transform:scaleX(0.9483);">md_mr_1708507587270_9pRDbYqqnskQgjxe</span>
<span class="t" id="t81" style="left:816.80px;top:640px;font-size:13.7px;color:#22243a;transform:scaleX(1.0000);">2</span>
<span class="t" id="t82" style="left:883.30px;top:640px;font-size:13.7px;color:#22243a;transform:scaleX(1.0521);">2024/1</span>
<span class="t" id="t83" style="left:1067.60px;top:640px;font-size:13.7px;color:#22243a;transform:scaleX(0.9833);">01 Jan 2024 - 31 Mar 2024</span>
<span class="t" id="t84" style="left:1311.50px;top:640px;font-size:13.7px;color:#22243a;transform:scaleX(0.9955);">Kanokphon Phetrat (Aimagin Co., Ltd.)</span>
<span class="t" id="t85" style="left:1658.30px;top:640px;font-size:13.7px;color:#22243a;transform:scaleX(1.0080);">2024-02-28 13:35:59</span>
<span class="t" id="t86" style="left:306.58px;top:683px;font-size:13.7px;color:#22243a;transform:scaleX(1.0183);">Edit</span>
<span class="t" id="t87" style="left:401.30px;top:683px;font-size:13.7px;color:#22243a;transform:scaleX(0.9483);">md_mr_1708507587270_9pRDbYqqnskQgjxe</span>
<span class="t" id="t88" style="left:815.63px;top:683px;font-size:13.7px;color:#22243a;transform:scaleX(1.1667);">1</span>
<span class="t" id="t89" style="left:883.30px;top:683px;font-size:13.7px;color:#22243a;transform:scaleX(1.0521);">2024/1</span>
<span class="t" id="t90" style="left:1067.60px;top:683px;font-size:13.7px;color:#22243a;transform:scaleX(0.9833);">01 Jan 2024 - 31 Mar 2024</span>
<span class="t" id="t91" style="left:1311.50px;top:683px;font-size:13.7px;color:#22243a;transform:scaleX(0.9955);">Kanokphon Phetrat (Aimagin Co., Ltd.)</span>
<span class="t" id="t92" style="left:1658.30px;top:683px;font-size:13.7px;color:#22243a;transform:scaleX(1.0080);">2024-02-28 13:36:12</span>
<span class="t" id="t93" style="left:306.58px;top:726px;font-size:13.7px;color:#22243a;transform:scaleX(1.0183);">Edit</span>
<span class="t" id="t94" style="left:401.30px;top:726px;font-size:13.7px;color:#22243a;transform:scaleX(0.9695);">md_mr_1708587412057_bu51d7IoyyIEfDql</span>
<span class="t" id="t95" style="left:816.80px;top:726px;font-size:13.7px;color:#22243a;transform:scaleX(1.0000);">2</span>
<span class="t" id="t96" style="left:883.30px;top:726px;font-size:13.7px;color:#22243a;transform:scaleX(1.0272);">2023/4</span>
<span class="t" id="t97" style="left:1067.60px;top:726px;font-size:13.7px;color:#22243a;transform:scaleX(0.9833);">01 Aug 2024 - 31 Oct 2024</span>
<span class="t" id="t98" style="left:1311.50px;top:726px;font-size:13.7px;color:#22243a;transform:scaleX(0.9955);">Kanokphon Phetrat (Aimagin Co., Ltd.)</span>
<span class="t" id="t99" style="left:1658.30px;top:726px;font-size:13.7px;color:#22243a;transform:scaleX(1.0001);">2024-02-22 15:48:58</span>
<span class="t" id="t100" style="left:306.58px;top:769px;font-size:13.7px;color:#22243a;transform:scaleX(1.0183);">Edit</span>
<span class="t" id="t101" style="left:401.30px;top:769px;font-size:13.7px;color:#22243a;transform:scaleX(0.9695);">md_mr_1708587412057_bu51d7IoyyIEfDql</span>
<span class="t" id="t102" style="left:815.63px;top:769px;font-size:13.7px;color:#22243a;transform:scaleX(1.1667);">1</span>
<span class="t" id="t103" style="left:883.30px;top:769px;font-size:13.7px;color:#22243a;transform:scaleX(1.0272);">2023/4</span>
<span class="t" id="t104" style="left:1067.60px;top:769px;font-size:13.7px;color:#22243a;transform:scaleX(0.9833);">01 Aug 2024 - 31 Oct 2024</span>
<span class="t" id="t105" style="left:1311.50px;top:769px;font-size:13.7px;color:#22243a;transform:scaleX(0.9955);">Kanokphon Phetrat (Aimagin Co., Ltd.)</span>
<span class="t" id="t106" style="left:1658.30px;top:769px;font-size:13.7px;color:#22243a;transform:scaleX(1.0162);">2024-02-23 11:32:31</span>
<span class="t" id="t107" style="left:306.58px;top:812px;font-size:13.7px;color:#22243a;transform:scaleX(1.0183);">Edit</span>
<span class="t" id="t108" style="left:401.30px;top:812px;font-size:13.7px;color:#22243a;transform:scaleX(0.9594);">md_mr_1708671667478_kH57ahwW71VQ8184</span>
<span class="t" id="t109" style="left:816.80px;top:812px;font-size:13.7px;color:#22243a;transform:scaleX(0.8750);">3</span>
<span class="t" id="t110" style="left:883.30px;top:812px;font-size:13.7px;color:#22243a;transform:scaleX(1.0272);">2023/3</span>
<span class="t" id="t111" style="left:1067.60px;top:812px;font-size:13.7px;color:#22243a;transform:scaleX(0.9816);">01 Jul 2024 - 30 Sep 2024</span>
<span class="t" id="t112" style="left:1312.50px;top:812px;font-size:13.7px;color:#22243a;transform:scaleX(1.0178);">thidarut J (TM)</span>
<span class="t" id="t113" style="left:1658.30px;top:812px;font-size:13.7px;color:#22243a;transform:scaleX(1.0001);">2024-02-27 14:31:46</span>
<span class="t" id="t114" style="left:306.58px;top:855px;font-size:13.7px;color:#22243a;transform:scaleX(1.0183);">Edit</span>
<span class="t" id="t115" style="left:401.30px;top:855px;font-size:13.7px;color:#22243a;transform:scaleX(0.9594);">md_mr_1708671667478_kH57ahwW71VQ8184</span>
<span class="t" id="t116" style="left:816.80px;top:855px;font-size:13.7px;color:#22243a;transform:scaleX(0.8750);">4</span>
<span class="t" id="t117" style="left:883.30px;top:855px;font-size:13.7px;color:#22243a;transform:scaleX(1.0272);">2023/3</span>
<span class="t" id="t118" style="left:1067.60px;top:855px;font-size:13.7px;color:#22243a;transform:scaleX(0.9816);">01 Jul 2024 - 30 Sep 2024</span>
<span class="t" id="t119" style="left:1312.50px;top:855px;font-size:13.7px;color:#22243a;transform:scaleX(1.0178);">thidarut J (TM)</span>
<span class="t" id="t120" style="left:1658.30px;top:855px;font-size:13.7px;color:#22243a;transform:scaleX(1.0080);">2024-02-27 15:06:41</span>
<span class="t" id="t121" style="left:666.30px;top:930px;font-size:14.8px;color:#5a6068;font-weight:700;transform:scaleX(0.8108);">Row :</span>
<span class="t" id="t122" style="left:701.62px;top:930px;font-size:14.8px;color:#6c757d;transform:scaleX(0.9825);">1-10/16</span>
<span class="t" id="t123" style="left:754.60px;top:930px;font-size:14.8px;color:#5a6068;font-weight:700;transform:scaleX(0.8556);">Page :</span>
<span class="t" id="t124" style="left:794.76px;top:930px;font-size:14.8px;color:#6c757d;transform:scaleX(1.0393);">1/2</span>
<span class="t" id="t125" style="left:844.30px;top:930px;font-size:14.8px;color:#5a6068;font-weight:700;transform:scaleX(0.8484);">Row per page:</span>
<span class="t" id="t126" style="left:953.30px;top:934px;font-size:12px;color:#343a40;transform:scaleX(0.9288);">10</span>
<span class="t" id="t127" style="left:1080.40px;top:933px;font-size:12px;color:#4c63e8;transform:scaleX(0.9420);">First</span>
<span class="t" id="t128" style="left:1159.30px;top:931px;font-size:12px;color:#ffffff;font-weight:700;transform:scaleX(0.7143);">1</span>
<span class="t" id="t129" style="left:1183.80px;top:931px;font-size:12px;color:#4c63e8;transform:scaleX(0.8857);">2</span>
<span class="t" id="t130" style="left:1245.80px;top:933px;font-size:12px;color:#4c63e8;transform:scaleX(0.9080);">Last</span>
<span class="t" id="t131" style="left:1293.60px;top:928px;font-size:14.8px;color:#5a6068;font-weight:700;transform:scaleX(0.8608);">Go to page :</span>
<span class="t" id="t132" style="left:1411.20px;top:933px;font-size:12.2px;color:#343a40;transform:scaleX(0.6857);">1</span>
<span class="t" id="t133" style="left:1545.93px;top:1124px;font-size:14.8px;color:#6c757d;transform:scaleX(0.8708);">Powered by</span>
<span class="t" id="t134" style="left:1618.50px;top:1124px;font-size:14.8px;color:#6c757d;font-weight:700;transform:scaleX(0.8513);">Aimagin Analytics</span>
<span class="t" id="t135" style="left:1731.30px;top:1124px;font-size:14.8px;color:#6c757d;transform:scaleX(0.9200);">© 2024 Aimagin Co.,Ltd.</span>
</body></html>
